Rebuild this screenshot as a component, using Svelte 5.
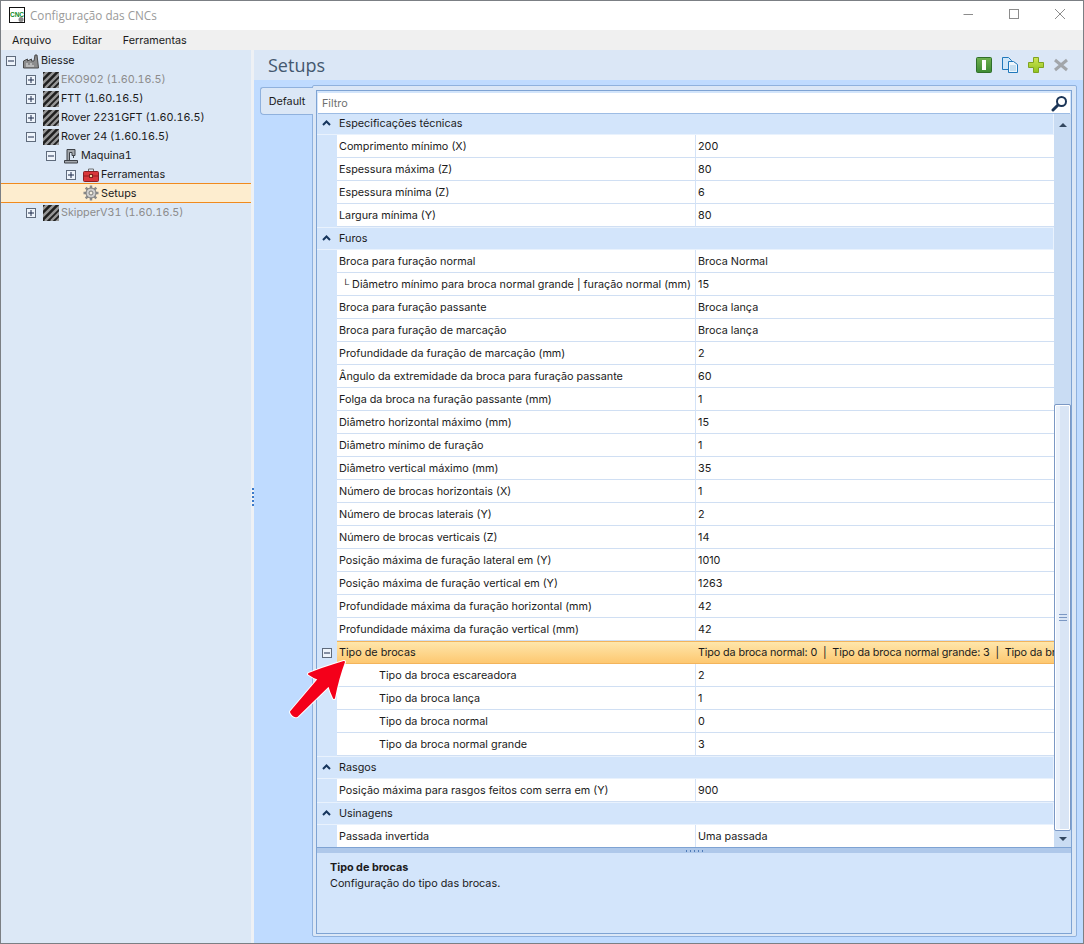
<script>
  const tree = [
    { label: 'Biesse', level: 0, exp: 'minus', icon: 'factory' },
    { label: 'EKO902 (1.60.16.5)', level: 1, exp: 'plus', icon: 'hatch', dim: true },
    { label: 'FTT (1.60.16.5)', level: 1, exp: 'plus', icon: 'hatch' },
    { label: 'Rover 2231GFT (1.60.16.5)', level: 1, exp: 'plus', icon: 'hatch' },
    { label: 'Rover 24 (1.60.16.5)', level: 1, exp: 'minus', icon: 'hatch' },
    { label: 'Maquina1', level: 2, exp: 'minus', icon: 'machine' },
    { label: 'Ferramentas', level: 3, exp: 'plus', icon: 'toolbox' },
    { label: 'Setups', level: 3, icon: 'gear', selected: true },
    { label: 'SkipperV31 (1.60.16.5)', level: 1, exp: 'plus', icon: 'hatch', dim: true }
  ];

  const groups = [
    {
      title: 'Especificações técnicas',
      rows: [
        ['Comprimento mínimo (X)', '200'],
        ['Espessura máxima (Z)', '80'],
        ['Espessura mínima (Z)', '6'],
        ['Largura mínima (Y)', '80']
      ]
    },
    {
      title: 'Furos',
      rows: [
        ['Broca para furação normal', 'Broca Normal'],
        ['Diâmetro mínimo para broca normal grande | furação normal (mm)', '15', 'child'],
        ['Broca para furação passante', 'Broca lança'],
        ['Broca para furação de marcação', 'Broca lança'],
        ['Profundidade da furação de marcação (mm)', '2'],
        ['Ângulo da extremidade da broca para furação passante', '60'],
        ['Folga da broca na furação passante (mm)', '1'],
        ['Diâmetro horizontal máximo (mm)', '15'],
        ['Diâmetro mínimo de furação', '1'],
        ['Diâmetro vertical máximo (mm)', '35'],
        ['Número de brocas horizontais (X)', '1'],
        ['Número de brocas laterais (Y)', '2'],
        ['Número de brocas verticais (Z)', '14'],
        ['Posição máxima de furação lateral em (Y)', '1010'],
        ['Posição máxima de furação vertical em (Y)', '1263'],
        ['Profundidade máxima da furação horizontal (mm)', '42'],
        ['Profundidade máxima da furação vertical (mm)', '42'],
        ['Tipo de brocas', 'Tipo da broca normal: 0  |  Tipo da broca normal grande: 3  |  Tipo da broca lança: 1  |  Tipo da broca escareadora: 2', 'active'],
        ['Tipo da broca escareadora', '2', 'sub'],
        ['Tipo da broca lança', '1', 'sub'],
        ['Tipo da broca normal', '0', 'sub'],
        ['Tipo da broca normal grande', '3', 'sub']
      ]
    },
    { title: 'Rasgos', rows: [['Posição máxima para rasgos feitos com serra em (Y)', '900']] },
    { title: 'Usinagens', rows: [['Passada invertida', 'Uma passada']] }
  ];
</script>

{#snippet expander(kind)}
  <svg class="exp" width="10" height="10" viewBox="0 0 10 10">
    <rect x=".5" y=".5" width="9" height="9" fill="#eef4fb" stroke="#5f6b7c" />
    <path d="M2 5h6" stroke="#1c2b4a" />
    {#if kind === 'plus'}<path d="M5 2v6" stroke="#1c2b4a" />{/if}
  </svg>
{/snippet}

{#snippet treeIcon(name)}
  {#if name === 'hatch'}
    <svg class="ti" width="16" height="16" viewBox="0 0 16 16">
      <rect width="16" height="16" fill="#1f1f1f" />
      <path d="M-2 6 6-2M-2 13 13-2M2 16 18 0M8 16 18 6M13 17 18 12" stroke="#969696" stroke-width="2.400" />
    </svg>
  {:else if name === 'factory'}
    <svg class="ti" width="16" height="16" viewBox="0 0 16 16">
      <path d="M.5 15V8l4-2v2l4-2v2h2.500l1-6h2l1.500 13z" fill="#8d8d8d" stroke="#4a4a4a" />
      <path d="M3 11h2M7 11h2M3 13h8" stroke="#e6e6e6" />
    </svg>
  {:else if name === 'machine'}
    <svg class="ti" width="16" height="16" viewBox="0 0 16 16">
      <path d="M4 1.500h8v6h-3v-3H6.500v8H4zM1.500 12.500h13v2.500h-13z" fill="#a4a8ad" stroke="#3e4248" />
      <path d="M10.500 8v2" stroke="#3e4248" />
    </svg>
  {:else if name === 'toolbox'}
    <svg class="ti" width="16" height="16" viewBox="0 0 16 16">
      <path d="M5.500 4V2h5v2" fill="none" stroke="#6e6e6e" />
      <rect x=".5" y="4.500" width="15" height="10" rx="1" fill="#d9363a" stroke="#8a2024" />
      <path d="M1 9h14" stroke="#8e2020" />
      <rect x="6.500" y="7.500" width="3" height="3" fill="#f0d9a0" stroke="#7e1f1f" />
    </svg>
  {:else}
    <svg class="ti" width="16" height="16" viewBox="0 0 16 16">
      <g stroke="#8a8a8a" stroke-width="2.400">
        <path d="M8 .5v15M.5 8h15M2.700 2.700l10.600 10.600M13.300 2.700 2.700 13.300" />
      </g>
      <circle cx="8" cy="8" r="5" fill="#cfcfcf" stroke="#7a7a7a" />
      <circle cx="8" cy="8" r="2" fill="#f5efe0" stroke="#7a7a7a" />
    </svg>
  {/if}
{/snippet}

<div class="window">
  <header class="titlebar">
    <svg class="logo" width="16" height="16" viewBox="0 0 16 16">
      <rect x=".5" y=".5" width="15" height="15" fill="#fff" stroke="#111" />
      <text x="8" y="9.500" text-anchor="middle" class="logo-text">CNC</text>
      <circle cx="12" cy="12.500" r="2.500" fill="#8a8a8a" />
    </svg>
    <span class="app-title">Configuração das CNCs</span>
    <div class="winbtns">
      <svg width="11" height="11" viewBox="0 0 11 11"><path d="M1.500 5.500h9.500" stroke="#8c8c8c" /></svg>
      <svg width="11" height="11" viewBox="0 0 11 11"><rect x="1.500" y=".5" width="9" height="9" fill="none" stroke="#8c8c8c" /></svg>
      <svg width="11" height="11" viewBox="0 0 11 11"><path d="M1 0l10 10M11 0 1 10" stroke="#8c8c8c" /></svg>
    </div>
  </header>

  <nav class="menubar">
    <span>Arquivo</span><span>Editar</span><span>Ferramentas</span>
  </nav>

  <div class="body">
    <aside class="tree">
      {#each tree as node}
        <div class="node" class:selected={node.selected} class:dim={node.dim} style="padding-left:{5 + node.level * 20}px">
          <span class="exp-slot">{#if node.exp}{@render expander(node.exp)}{/if}</span>
          {@render treeIcon(node.icon)}
          <span class="node-label">{node.label}</span>
        </div>
      {/each}
    </aside>

    <div class="splitter"><span></span><span></span><span></span><span></span><span></span></div>

    <main class="main">
      <div class="head">
        <h1>Setups</h1>
        <div class="tools">
          <svg width="16" height="16" viewBox="0 0 16 16">
            <defs>
              <linearGradient id="ig" x1="0" y1="0" x2="0" y2="1">
                <stop offset="0" stop-color="#6fb04f" /><stop offset="1" stop-color="#3d8a33" />
              </linearGradient>
              <linearGradient id="pg" x1="0" y1="0" x2="0" y2="1">
                <stop offset="0" stop-color="#cfe455" /><stop offset="1" stop-color="#8fc31f" />
              </linearGradient>
            </defs>
            <rect x=".5" y=".5" width="15" height="15" rx="1" fill="url(#ig)" stroke="#2f6f2a" />
            <rect x="6" y="3" width="4" height="10" fill="#fff" />
          </svg>
          <svg width="16" height="16" viewBox="0 0 16 16">
            <path d="M.5.500h6l3 3v9h-9z" fill="#cfe6f8" stroke="#1f78bb" />
            <path d="M6.500 4.500h5l4 3v8h-9z" fill="#eef6fc" stroke="#1f78bb" />
            <path d="M8 9h6M8 11h6M8 13h6" stroke="#9cc7e6" />
          </svg>
          <svg width="16" height="16" viewBox="0 0 16 16">
            <path d="M5.500 .5h5v5h5v5h-5v5h-5v-5h-5v-5h5z" fill="url(#pg)" stroke="#7ea31f" />
          </svg>
          <svg width="14" height="16" viewBox="0 0 14 16">
            <path d="M1 3l12 10M13 3 1 13" stroke="#a2a6aa" stroke-width="3" />
          </svg>
        </div>
      </div>

      <div class="content">
        <div class="tab">Default</div>
        <div class="tabpage">
          <div class="panel">
            <div class="filter">
              <span>Filtro</span>
              <svg width="17" height="17" viewBox="0 0 17 17">
                <circle cx="10.500" cy="6.500" r="4.500" fill="#fff" stroke="#1b3557" stroke-width="2" />
                <path d="M7 10l-5 5" stroke="#1b3557" stroke-width="3" stroke-linecap="round" />
              </svg>
            </div>

            <div class="gridwrap">
              <div class="grid">
                {#each groups as g}
                  <div class="group">
                    <span class="chev"><svg width="9" height="6" viewBox="0 0 9 6"><path d="M1 5l3.500-3.500L8 5" fill="none" stroke="#17365d" stroke-width="2" /></svg></span>
                    <span class="group-title">{g.title}</span>
                  </div>
                  {#each g.rows as r}
                    <div class="row" class:active={r[2] === 'active'}>
                      <span class="gutter">{#if r[2] === 'active'}{@render expander('minus')}{/if}</span>
                      <span class="name" class:sub={r[2] === 'sub'} class:child={r[2] === 'child'}>{#if r[2] === 'child'}<i>└</i>{/if}{r[0]}</span>
                      <span class="value">{r[1]}</span>
                    </div>
                  {/each}
                {/each}
              </div>

              <div class="scrollbar">
                <div class="sb-btn"><i class="up"></i></div>
                <div class="sb-track">
                  <div class="sb-thumb"><b></b></div>
                </div>
                <div class="sb-btn"><i class="down"></i></div>
              </div>
            </div>

            <div class="hsplit"><span></span><span></span><span></span><span></span><span></span></div>

            <div class="desc">
              <strong>Tipo de brocas</strong>
              <p>Configuração do tipo das brocas.</p>
            </div>
          </div>
        </div>
      </div>
    </main>
  </div>

  <!-- callout drawn over the screenshot -->
  <svg class="callout" width="70" height="70" viewBox="0 0 70 70">
    <path class="arrow-halo" d="M24 20Q36 15 59 8 53 24 49 44 46 38 44 31L12 62Q8 63 6 58L34 25Q28 23 24 20z" />
    <path class="arrow" d="M24 20Q36 15 59 8 53 24 49 44 46 38 44 31L12 62Q8 63 6 58L34 25Q28 23 24 20z" />
  </svg>
</div>

<style>
  :global(body) {
    margin: 0;
    font-family: Inter, "Liberation Sans", sans-serif;
    font-size: 10.8px;
    color: #1b1b1b;
  }
  .window {
    position: relative;
    width: 1084px;
    height: 944px;
    box-sizing: border-box;
    border: 1px solid #7b7f84;
    display: flex;
    flex-direction: column;
    background: #fff;
    overflow: hidden;
  }
  .titlebar {
    height: 29px;
    flex: none;
    box-sizing: border-box;
    display: flex;
    align-items: center;
    padding: 0 0 2px 8px;
  }
  .logo { margin-right: 5px; }
  .logo-text { font: bold 6.5px "Liberation Sans", sans-serif; fill: #0a8a1e; }
  .app-title { font-size: 11.7px; color: #9a9a9a; font-family: "Open Sans", sans-serif; }
  .winbtns { margin-left: auto; display: flex; gap: 35px; padding-right: 18px; }
  .menubar {
    height: 20px;
    flex: none;
    background: #f0f0f0;
    display: flex;
    align-items: center;
    gap: 21px;
    padding-left: 11px;
  }
  .body { flex: 1; display: flex; min-height: 0; }

  .tree { width: 250px; flex: none; background: #dce8f6; padding-top: 1px; font-variant-numeric: tabular-nums; }
  .node { height: 19px; display: flex; align-items: center; box-sizing: border-box; }
  .node.selected {
    height: 20px;
    margin-top: -1px;
    background: #fdedcf;
    border-top: 1px solid #f08a1d;
    border-bottom: 1px solid #f08a1d;
  }
  .node.dim .node-label { color: #8c8c8c; }
  .exp-slot { width: 17px; flex: none; display: flex; }
  .exp { display: block; }
  .ti { flex: none; margin-right: 2px; }

  .splitter {
    width: 3px;
    flex: none;
    box-sizing: border-box;
    padding-left: 1px;
    background: #eef1f5;
    display: flex;
    flex-direction: column;
    justify-content: center;
    gap: 2px;
  }
  .splitter span { width: 2px; height: 2px; background: #3a78c8; }

  .main { flex: 1; min-width: 0; display: flex; flex-direction: column; background: #bfdbff; }
  .head {
    height: 30px;
    flex: none;
    background: #dbe7f6;
    display: flex;
    align-items: center;
    justify-content: space-between;
    padding: 0 15px 0 14px;
  }
  h1 { margin: 0; font: 400 18px "Open Sans", sans-serif; color: #44586f; }
  .tools { display: flex; align-items: center; gap: 10px; }
  .tools svg { display: block; }

  .content {
    flex: 1;
    min-height: 0;
    display: flex;
    padding: 5px 6px 6px 6px;
  }
  .tab {
    width: 53px;
    height: 28px;
    margin: 2px -1px 0 0;
    position: relative;
    z-index: 1;
    box-sizing: border-box;
    background: #dbe7f6;
    border: 1px solid #8fb1dd;
    border-right: 0;
    border-radius: 3px 0 0 4px;
    display: flex;
    align-items: center;
    justify-content: center;
    flex: none;
  }
  .tabpage {
    flex: 1;
    min-width: 0;
    background: #dbe7f6;
    border: 1px solid #8fb1dd;
    border-radius: 2px;
    padding: 4px 4px 2px 3px;
    display: flex;
  }
  .panel {
    flex: 1;
    min-width: 0;
    border: 1px solid #7ea3d3;
    background: #d3e5fb;
    display: flex;
    flex-direction: column;
  }
  .filter {
    height: 21px;
    flex: none;
    margin: 2px 1px 0 1px;
    box-sizing: border-box;
    background: #fff;
    border-bottom: 1px solid #9dbce4;
    display: flex;
    align-items: center;
    justify-content: space-between;
    padding: 1px 2px 0 4px;
    color: #6f6f6f;
  }
  .gridwrap { flex: 1; min-height: 0; display: flex; overflow: hidden; }
  /* list is scrolled by 2px, so the first group sits under the filter */
  .grid { flex: 1; min-width: 0; overflow: hidden; margin-top: -2px; }

  .group {
    height: 23px;
    box-sizing: border-box;
    display: flex;
    align-items: center;
    padding-bottom: 1px;
    border: 1px solid #e9f2fd;
    border-width: 1px 1px 1px 0;
    background: #d3e5fb;
  }
  .chev { width: 19px; flex: none; display: flex; justify-content: center; }
  .chev svg { display: block; }
  .group-title { padding-left: 3px; }
  .row { height: 23px; display: flex; box-sizing: border-box; }
  .gutter {
    width: 20px;
    flex: none;
    background: #d3e5fb;
    display: flex;
    align-items: center;
    padding-left: 5px;
    box-sizing: border-box;
  }
  .name, .value {
    background: #fff;
    border-bottom: 1px solid #d0dff3;
    box-sizing: border-box;
    display: flex;
    align-items: center;
    white-space: pre;
    overflow: hidden;
  }
  .name { width: 359px; flex: none; padding-left: 2px; border-right: 1px solid #d4e3f7; }
  .name.sub { padding-left: 42px; }
  .name.child { padding-left: 5px; }
  .name i { font-style: normal; font-size: 10px; margin-right: 3px; }
  .value { flex: 1; min-width: 0; padding-left: 2px; }
  .active .name, .active .value {
    background: linear-gradient(#fee6ab, #fdc871);
    border-top: 1px solid #f3b45b;
    border-bottom: 1px solid #f3b45b;
    border-right: 0;
  }
  .active .value { letter-spacing: -.12px; }

  .scrollbar { width: 17px; flex: none; background: #c9dcf3; display: flex; flex-direction: column; }
  .sb-btn { height: 21px; flex: none; display: flex; align-items: center; justify-content: center; }
  .sb-btn:last-child { height: 16px; }
  .sb-btn i { width: 0; height: 0; border-left: 4px solid transparent; border-right: 4px solid transparent; }
  .sb-btn i.up { border-bottom: 4px solid #33475f; }
  .sb-btn i.down { border-top: 4px solid #33475f; }
  .sb-track { flex: 1; min-height: 0; display: flex; flex-direction: column; justify-content: flex-end; }
  .sb-thumb {
    height: 427px;
    box-sizing: border-box;
    border: 1px solid #7b98c4;
    border-radius: 2px;
    background: linear-gradient(90deg, #eaf1fb 30%, #d9e5f5 35%);
    box-shadow: inset 0 0 0 1px #fff;
    display: flex;
    align-items: center;
    justify-content: center;
  }
  .sb-thumb b {
    width: 8px;
    height: 5px;
    border-top: 1px solid #7b98c4;
    border-bottom: 1px solid #7b98c4;
    background: linear-gradient(#7b98c4, #7b98c4) center / 100% 1px no-repeat;
  }
  .hsplit {
    height: 6px;
    flex: none;
    background: #aec8ea;
    border-top: 1px solid #7ea3d3;
    box-sizing: border-box;
    display: flex;
    justify-content: center;
    align-items: center;
    gap: 3px;
  }
  .hsplit span { width: 1px; height: 2px; background: #4f7cb8; }
  .desc { height: 80px; flex: none; padding: 8px 13px; box-sizing: border-box; }
  .desc strong { display: block; font-weight: 700; }
  .desc p { margin: 3px 0 0; }
  .callout { position: absolute; left: 284px; top: 653px; pointer-events: none; }
  .arrow-halo { fill: #fff; stroke: #fff; stroke-width: 4; stroke-linejoin: round; }
  .arrow { fill: #f4001a; stroke: #f4001a; stroke-width: 2; stroke-linejoin: round; }
</style>
